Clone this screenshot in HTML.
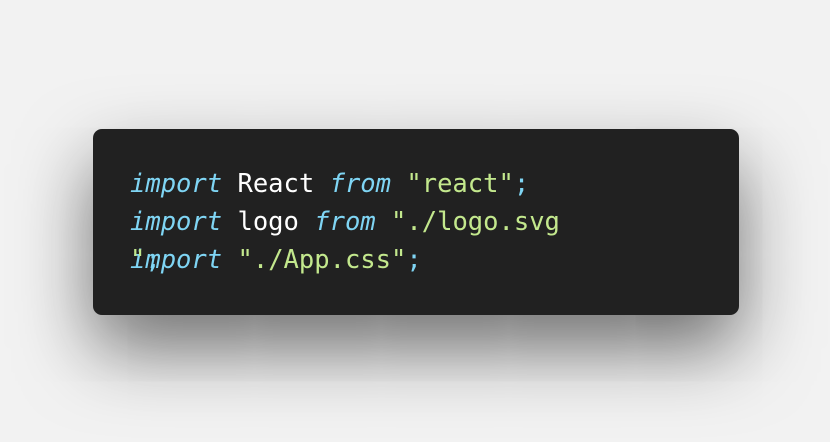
<!DOCTYPE html>
<html><head><style>
html,body{margin:0;padding:0;width:830px;height:442px;background:#f2f2f2;overflow:hidden}
.card{position:absolute;left:93px;top:129px;width:646px;height:186px;background:#212121;border-radius:9px;box-shadow:0 34px 75px rgba(0,0,0,0.55)}
.code{position:absolute;left:130px;top:165px;font-family:"DejaVu Sans Mono","Liberation Mono",monospace;font-size:25.5px;line-height:38px;white-space:pre;color:#fff}
.k{color:#7fd5f4;font-style:italic}
.s{color:#c3e88d}
.p{color:#7fd5f4}
.ov{position:absolute;left:0;top:76px}
</style></head><body>
<div class="card"></div>
<div class="code"><div><span class="k">import</span> React <span class="k">from</span> <span class="s">"react"</span><span class="p">;</span></div><div><span class="k">import</span> logo <span class="k">from</span> <span class="s">"./logo.svg</span></div><div><span class="k">import</span> <span class="s">"./App.css"</span><span class="p">;</span></div><div class="ov"><span class="s">"</span><span class="p">;</span></div></div>
</body></html>
